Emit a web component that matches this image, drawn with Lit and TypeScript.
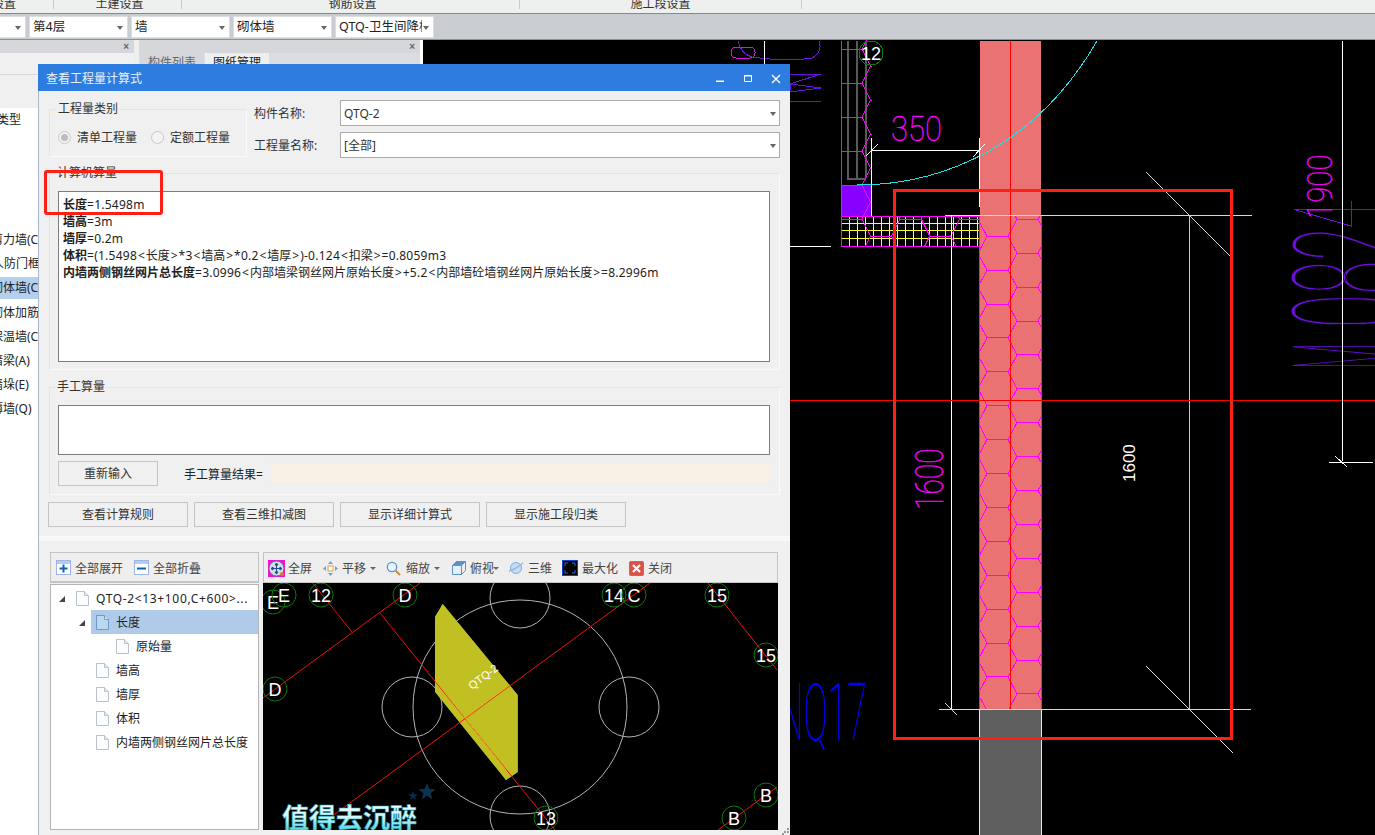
import { LitElement, html, css, svg } from 'lit';
import { customElement } from 'lit/decorators.js';

// hexagon mesh used by the wall hatching, returned as one path string
function hexPath(ox: number, oy: number, dx: number, p: number, cols: number, rowsUp: number, rowsDown: number) {
  let d = '';
  const L = 21;
  for (let c = 0; c < cols; c++) {
    for (let r = -rowsUp; r <= rowsDown; r++) {
      const x = ox + c * dx;
      const y = oy + r * p + (c % 2 ? p / 2 : 0);
      d += `M${x} ${y}h${L}M${x + L} ${y}L${x + dx} ${y - p / 2}M${x + L} ${y}L${x + dx} ${y + p / 2}`;
    }
  }
  return d;
}

const bubble = (x: number, y: number, t: string) => svg`
  <circle cx=${x} cy=${y} r="12" fill="none" stroke="#0a7a0a"></circle>
  <text x=${x} y=${y + 6.5} class="bub">${t}</text>`;

const star = (x: number, y: number, r: number, fill: string) => {
  const pts = [];
  for (let i = 0; i < 10; i++) {
    const a = (Math.PI / 5) * i - Math.PI / 2;
    const q = i % 2 ? r * 0.42 : r;
    pts.push(`${x + q * Math.cos(a)},${y + q * Math.sin(a)}`);
  }
  return svg`<polygon points=${pts.join(' ')} fill=${fill}></polygon>`;
};

// the formula text spaces its latin runs wider than the CJK ones
const formula = (s: string) =>
  s.split(/([<>]|[^<>\u4e00-\u9fff]+)/).filter(Boolean).map((p) =>
    p === '<' || p === '>'
      ? html`<span class="ang">${p}</span>`
      : /[\u4e00-\u9fff]/.test(p)
        ? p
        : html`<span class="num">${p}</span>`,
  );

const leftRows: [string, number, boolean?][] = [
  ['砖墙类型', -27], ['', 0], ['', 0], ['', 0], ['', 0],
  ['剪力墙(C)', -9], ['人防门框', -8], ['砌体墙(C)', -9, true], ['砌体加筋', -9],
  ['保温墙(C)', -9], ['暗梁(A)', -9], ['墙垛(E)', -9], ['薄墙(Q)', -9],
];

const docIcon = (blue = false) => html`<svg class="doc" width="13" height="15" viewBox="0 0 13 15">
  <path d="M.5.5h8l4 4v10H.5z" fill=${blue ? '#bcd7f2' : '#fbfcfe'} stroke=${blue ? '#6d9cc9' : '#b9c1cf'}></path>
  <path d="M8.5.5v4h4" fill="#e3e8f0" stroke=${blue ? '#6d9cc9' : '#b9c1cf'}></path>
</svg>`;

@customElement('app-root')
export class AppRoot extends LitElement {
  static styles = css`
    :host {
      display: block;
      position: relative;
      width: 1375px;
      height: 835px;
      overflow: hidden;
      font: 12px 'Noto Sans', 'Noto Sans CJK SC', sans-serif;
      color: #222;
      background: #000;
    }
    .menu {
      display: flex;
      height: 13px;
      background: #eef0f0;
      border-bottom: 1px solid #85888c;
      overflow: hidden;
      line-height: 8px;
      color: #333;
    }
    .menu div {
      text-align: center;
      border-right: 1px solid #c9cccf;
      height: 9px;
      white-space: nowrap;
      box-sizing: content-box;
    }
    .bar {
      display: flex;
      gap: 3px;
      height: 26px;
      padding-top: 2px;
      box-sizing: border-box;
      background: #c9ccd1;
      border-bottom: 1px solid #8e9195;
      margin-left: -80px;
    }
    .pick {
      position: relative;
      box-sizing: border-box;
      width: 99px;
      height: 22px;
      background: #fff;
      border: 1px solid #dcdde0;
      padding-left: 3px;
      line-height: 20px;
      font-size: 12.5px;
      overflow: hidden;
      white-space: nowrap;
    }
    .pick.first { width: 106px; }
    .pick span { display: block; width: 83px; overflow: hidden; }
    .arrow {
      position: absolute;
      right: 4px;
      top: 9px;
      border: 3.5px solid transparent;
      border-top: 4px solid #666;
      border-bottom: 0;
    }
    .main { display: flex; height: 795px; }
    .left { display: flex; width: 423px; flex: none; background: #fff; }
    .p1 { width: 134px; background: #fff; }
    .gap { width: 5px; background: #eee; }
    .p2 { width: 281px; background: #eee; }
    .phead {
      position: relative;
      height: 13px;
      background: #d5d7db;
    }
    .phead i {
      position: absolute;
      right: 5px;
      top: 1px;
      font: bold 10px/12px 'Liberation Sans', sans-serif;
      color: #666;
    }
    .strip { height: 21px; background: #f0f0f0; border-bottom: 1px solid #d8d8d8; }
    .strip2 { height: 33px; background: #f0f0f0; }
    .tabs { display: flex; gap: 1px; height: 11px; padding-left: 1px; background: #dcdde0; }
    .tabs span { width: 64px; text-align: center; color: #666; background: #d5d7db; line-height: 20px; overflow: hidden; }
    .tabs span + span { background: #efefef; color: #222; }
    .lrow { height: 24px; line-height: 24px; white-space: nowrap; }
    .lrow span { display: block; }
    .lrow.sel span { background: #b5cfee; height: 22px; line-height: 22px; margin-top: 1px; }
    .lrow.sel { line-height: 22px; }
    .stage { flex: 1; position: relative; background: #000; }
    .stage svg { display: block; }
    .bub { fill: #fff; font: 18px 'Liberation Sans', sans-serif; text-anchor: middle; }
    .cad { font-family: Roboto, 'Liberation Sans', sans-serif; font-weight: 100; }
    .pink { fill: #ff00ff; stroke: #ff00ff; stroke-width: .35px; vector-effect: non-scaling-stroke; }
    .blue { fill: #0000ff; stroke: #0000ff; stroke-width: .35px; vector-effect: non-scaling-stroke; }
    .thin { stroke: #000; stroke-width: .6px; vector-effect: non-scaling-stroke; }
    .dlg {
      position: absolute;
      left: 38px;
      top: 64px;
      width: 752px;
      height: 771px;
      box-sizing: border-box;
      background: #f0f0f0;
      border-left: 1px solid #a9b7cf;
    }
    .title {
      display: flex;
      align-items: center;
      height: 27px;
      margin-left: -1px;
      padding-left: 8px;
      background: #2d7de0;
      color: #e9f2fc;
    }
    .title svg { margin-left: auto; margin-right: 4px; }
    .body { padding: 0 10px; position: relative; }
    fieldset {
      margin: 0;
      padding: 0;
      box-sizing: border-box;
      border: 1px solid #e4e4e4;
      border-right-color: #fafafa;
      border-bottom-color: #fafafa;
      min-width: 0;
    }
    legend { margin-left: 7px; padding: 0 1px; line-height: 12px; color: #333; }
    .top { display: flex; padding-top: 9px; height: 58px; box-sizing: content-box; }
    .kind {
      width: 198px;
      height: 54px;
      margin-top: 3px;
      flex: none;
    }
    .radios { display: flex; align-items: center; margin: 13px 0 0 8px; height: 18px; color: #333; }
    .radio {
      box-sizing: border-box;
      width: 13px;
      height: 13px;
      border-radius: 50%;
      border: 1px solid #c8c8c8;
      background: #f4f4f4;
      margin-right: 6px;
      display: grid;
      place-items: center;
    }
    .radio b { width: 7px; height: 7px; border-radius: 50%; background: #bcbcbc; }
    .radios label { margin-right: 14px; }
    .form {
      flex: 1;
      display: grid;
      grid-template-columns: 86px 1fr;
      grid-auto-rows: 26px;
      row-gap: 6px;
      align-items: center;
      margin-left: 7px;
      color: #333;
    }
    .box {
      position: relative;
      box-sizing: border-box;
      height: 26px;
      background: #fff;
      border: 1px solid #adadad;
      line-height: 25px;
      padding-left: 3px;
    }
    .box .arrow { right: 3px; top: 11px; }
    .calc { height: 203px; margin-top: 9px; padding: 0 9px 0 8px; }
    .calc legend, .hand legend { margin-left: -2px; }
    .area {
      box-sizing: border-box;
      background: #fff;
      border: 1px solid #7d7d7d;
    }
    .calc .area { height: 171px; margin-top: 12px; padding: 4px 4px; line-height: 17px; color: #222; white-space: nowrap; }
    .calc b { font-weight: 700; }
    .num { letter-spacing: .25px; }
    .ang { padding: 0 .95px; }
    .hand { height: 114px; margin-top: 11px; padding: 0 9px 0 8px; }
    .hand .area { height: 50px; margin-top: 12px; }
    .hrow { display: flex; align-items: center; margin-top: 6px; }
    .btn {
      box-sizing: border-box;
      height: 25px;
      background: #f0f0f0;
      border: 1px solid #c4c4c4;
      text-align: center;
      line-height: 23px;
      color: #333;
      flex: none;
    }
    .hrow .btn { width: 100px; margin-right: 26px; }
    .res { flex: 1; height: 21px; margin-left: 7px; background: #f9f0e6; border: 1px solid #eee; box-sizing: border-box; }
    .btns { display: flex; gap: 6px; margin: 7px 0 0 -1px; }
    .btns .btn { width: 140px; }
    .band { height: 5px; margin: 9px -10px 0; background: #f8f8f8; }
    .lower { display: flex; gap: 4px; margin: 11px 0 0 1px; }
    .tree-p { width: 209px; flex: none; }
    .view-p { width: 515px; flex: none; }
    .tool {
      display: flex;
      align-items: center;
      box-sizing: border-box;
      height: 31px;
      padding-top: 1px;
      background: #eee;
      border: 1px solid #c4c4c4;
      color: #444;
      white-space: nowrap;
    }
    .tool svg { flex: none; }
    .tool .tri {
      margin: 0 0 0 4px;
      border: 3px solid transparent;
      border-top: 3px solid #666;
      border-bottom: 0;
      flex: none;
    }
    .tree-p .tool { height: 31px; padding-left: 5px; border-bottom-width: 2px; }
    .tree {
      box-sizing: border-box;
      height: 246px;
      margin-top: 1px;
      background: #fff;
      border: 1px solid #b5b5b5;
      padding-top: 1px;
    }
    .node {
      display: flex;
      align-items: center;
      height: 24px;
      white-space: nowrap;
      color: #222;
    }
    .node .doc { margin-right: 7px; flex: none; }
    .node.sel { background: #b0cbea; }
    .node.root { letter-spacing: .65px; }
    .twist {
      width: 0;
      height: 0;
      border-style: solid;
      border-width: 0 0 6px 6px;
      border-color: transparent transparent #444 transparent;
      margin-top: 1px;
      flex: none;
    }
    .mini { display: block; background: #000; }
    .cap { font: bold 27px 'Noto Sans CJK SC', sans-serif; }
    .note {
      position: absolute;
      left: 5px;
      top: 79px;
      width: 119px;
      height: 45px;
      box-sizing: border-box;
      border: 3px solid #ff2015;
      border-radius: 3px;
    }
    .grip { position: absolute; right: 1px; bottom: 0; }
  `;

  private stage() {
    const wall = hexPath(957, 219.3, 30, 33.9, 4, 1, 15);
    const col = hexPath(841, 219, 29.6, 34, 6, 6, 1);
    let v = '';
    for (let x = 841; x < 980; x += 8) v += `M${x} 216V247`;
    for (let y = 223; y < 247; y += 7.7) v += `M841 ${y}H980`;
    return svg`
    <svg width="952" height="795" viewBox="423 40 952 795" shape-rendering="crispEdges">
      <defs>
        <clipPath id="cw"><rect x="980" y="216" width="61" height="494"></rect></clipPath>
        <clipPath id="cc"><rect x="841" y="40" width="31" height="176"></rect><rect x="841" y="216" width="139" height="31"></rect></clipPath>
      </defs>
      <!-- door symbol top, mostly behind the dialog -->
      <rect x="731" y="47" width="24" height="11" rx="5" fill="none" stroke="#e010e0"></rect>
      <path d="M738 41Q742 58 760 58Q790 62 812 58Q823 52 819 41" fill="none" stroke="#7a10e8"></path>
      <path d="M764 41V64" stroke="#fff"></path>
      <path d="M790 74H821L790 84V92L821 88M790 101H821M790 84L821 88" fill="none" stroke="#6a10d8"></path>
      <path d="M790 246H831" stroke="#fff"></path>

      <rect x="841" y="185" width="31" height="31" fill="#8800ff"></rect>
      <path d="${v}" stroke="#ffff33"></path>
      <path d="M847.5 41V178.5H866M857 41V178M866 41V178" fill="none" stroke="#585858" stroke-width="2"></path>
      <path d="${col}" fill="none" stroke="#ff00ff" clip-path="url(#cc)"></path>
      <path d="M841.5 41V246.5H980M841.5 216H980" fill="none" stroke="#ff00ff"></path>
      ${bubble(871, 53, '12')}

      <rect x="980" y="41" width="61" height="669" fill="#eb7272"></rect>
      <rect x="980" y="710" width="61" height="125" fill="#5f5f5f"></rect>
      <path d="M979.5 710V835M1041.5 710V835" stroke="#ffff33"></path>
      <path d="${wall}" fill="none" stroke="#ff00ff" clip-path="url(#cw)"></path>
      <path d="M980 215.5H1041M979.5 215V710M1041 215V710M980 709.5H1041" fill="none" stroke="#ff00ff"></path>
      <path d="M1010.5 41V710" stroke="#ff0000"></path>

      <path d="M857 185C950 185 1040 140 1097 41" fill="none" stroke="#19e3e8"></path>

      <path d="M871.5 138V216M871 150.5H980M979.5 138V207M866 156L878 144M973 157L985 144" fill="none" stroke="#fff"></path>
      <text class="cad pink" transform="translate(891 141) scale(.86 1)" font-size="36">350</text>

      <!-- dimension lines -->
      <path d="M945 215.5H1252" stroke="#d8d8d8"></path>
      <path d="M951.5 215V709" stroke="#fff"></path>
      <path d="M1189.5 215V709" stroke="#c8c8c8"></path>
      <path d="M939 709.5H1251" stroke="#d8d8d8"></path>
      <path d="M1146 172L1230 256M1146 666L1233 753M945 703L957 715" stroke="#ddd"></path>
      <text class="cad pink" transform="translate(943 510) rotate(-90) scale(.74 1)" font-size="38">1600</text>
      <text transform="translate(1135 482) rotate(-90)" font-size="17" fill="#fff" font-family="Liberation Sans">1600</text>

      <path d="M790 400.5H1375" stroke="#ff0000"></path>

      <!-- right-hand door label -->
      <path d="M1294 209.5H1375M1294 209.5L1351 226V201" fill="none" stroke="#6a10d8"></path>
      <text class="cad pink" transform="translate(1332 219) rotate(-90) scale(.82 1)" font-size="36">1900</text>
      <text class="cad" transform="translate(1400 369) rotate(-90) scale(.2 1)" font-size="150" fill="#6a10d8">M</text>
      <text class="cad thin" transform="translate(1400 328) rotate(-90) scale(.41 1)" font-size="150" fill="#6a10d8">082</text>
      <path d="M1342.5 41V461M1329 462H1373M1335 456L1347 467" fill="none" stroke="#fff"></path>

      <text class="cad blue" transform="translate(778 740) scale(.45 1)" font-size="80">NQ17</text>

      <rect x="894.5" y="190.5" width="337" height="548" rx="1" fill="none" stroke="#ff2015" stroke-width="3.5"></rect>
    </svg>`;
  }

  private mini() {
    return svg`
    <svg class="mini" width="515" height="247" viewBox="263 583 515 247">
      <defs>
        <linearGradient id="capg" x1="0" y1="0" x2="0" y2="1">
          <stop offset="0" stop-color="#ffffff"></stop>
          <stop offset=".5" stop-color="#d6f8fb"></stop>
          <stop offset="1" stop-color="#1cc3d8"></stop>
        </linearGradient>
      </defs>
      <path d="M442.7 604L435 617V691.7L506 780L517.7 772V695Z" fill="#c0bf23"></path>
      <g fill="none" stroke="#b4b4b4">
        <circle cx="520" cy="707" r="107"></circle>
        <circle cx="520" cy="598" r="30"></circle>
        <circle cx="520" cy="816" r="30"></circle>
        <circle cx="412" cy="707" r="30"></circle>
        <circle cx="629" cy="707" r="30"></circle>
      </g>
      <path d="M442.7 604L435 617V691.7L506 780L517.7 772V695Z" fill="#c0bf23" fill-opacity=".85"></path>
      <g fill="none" stroke="#ee1111">
        <path d="M263 698L420 583"></path>
        <path d="M650 583L320 825"></path>
        <path d="M312.7 583L352 632"></path>
        <path d="M380 613L555 830"></path>
        <path d="M708 583L777 670"></path>
        <path d="M777 787L718 830"></path>
      </g>
      <path d="M510 685L465 718M435 680L506 770" stroke="#f0a020" fill="none"></path>
      <text transform="translate(472 690) rotate(-37)" font-size="11" fill="#fff" font-family="Liberation Sans">QTQ-2</text>
      ${bubble(273, 602, 'E')}${bubble(284, 595, 'E')}${bubble(321, 595, '12')}
      ${bubble(405, 595, 'D')}${bubble(275, 689, 'D')}${bubble(614, 595, '14')}
      ${bubble(634, 595, 'C')}${bubble(717, 595, '15')}${bubble(766, 655, '15')}
      ${bubble(546, 818, '13')}${bubble(766, 795, 'B')}${bubble(734, 818, 'B')}
      ${star(413, 796, 5, '#0b2a45')}${star(427, 792, 9, '#0c3350')}
      <text x="282" y="828" class="cap" fill="url(#capg)" stroke="#17a9c0" stroke-width=".5" textLength="135">值得去沉醉</text>
    </svg>`;
  }

  render() {
    return html`
      <div class="menu">
        <div style="width:53px;text-indent:-8px;text-align:left">设置</div>
        <div style="width:123px;padding-left:4px">土建设置</div>
        <div style="width:333px;padding-left:4px">钢筋设置</div>
        <div style="width:281px">施工段设置</div>
      </div>
      <div class="bar">
        <div class="pick first"><i class="arrow"></i></div>
        ${['第4层', '墙', '砌体墙', 'QTQ-卫生间降板'].map(
          (t) => html`<div class="pick"><span>${t}</span><i class="arrow"></i></div>`,
        )}
      </div>
      <div class="main">
        <div class="left">
          <div class="p1">
            <div class="phead"><i>×</i></div>
            <div class="strip"></div>
            <div class="strip2"></div>
            ${leftRows.map(
              ([t, off, sel]) => html`<div class="lrow ${sel ? 'sel' : ''}"><span style="text-indent:${off}px">${t}</span></div>`,
            )}
          </div>
          <div class="gap"></div>
          <div class="p2">
            <div class="phead"><i>×</i></div>
            <div class="tabs"><span>构件列表</span><span>图纸管理</span></div>
          </div>
        </div>
        <div class="stage">${this.stage()}</div>
      </div>

      <div class="dlg">
        <div class="title">
          查看工程量计算式
          <svg width="70" height="27" viewBox="0 0 70 27">
            <path d="M0 16.5H8V18H0Z" fill="#fff"></path>
            <path d="M28.5 11.5H35.5V17.5H28.5ZM28 12H36" fill="none" stroke="#fff"></path>
            <path d="M56 11L64 19M64 11L56 19" stroke="#fff" stroke-width="1.4"></path>
          </svg>
        </div>
        <div class="body">
          <div class="top">
            <fieldset class="kind">
              <legend>工程量类别</legend>
              <div class="radios">
                <span class="radio"><b></b></span><label>清单工程量</label>
                <span class="radio"></span><label>定额工程量</label>
              </div>
            </fieldset>
            <div class="form">
              <span>构件名称:</span>
              <div class="box">QTQ-2<i class="arrow"></i></div>
              <span>工程量名称:</span>
              <div class="box">[全部]<i class="arrow"></i></div>
            </div>
          </div>

          <fieldset class="calc">
            <legend>计算机算量</legend>
            <div class="area">
              <div><b>长度</b>${formula('=1.5498m')}</div>
              <div><b>墙高</b>${formula('=3m')}</div>
              <div><b>墙厚</b>${formula('=0.2m')}</div>
              <div><b>体积</b>${formula('=(1.5498<长度>*3<墙高>*0.2<墙厚>)-0.124<扣梁>=0.8059m3')}</div>
              <div><b>内墙两侧钢丝网片总长度</b>${formula('=3.0996<内部墙梁钢丝网片原始长度>+5.2<内部墙砼墙钢丝网片原始长度>=8.2996m')}</div>
            </div>
          </fieldset>

          <fieldset class="hand">
            <legend>手工算量</legend>
            <div class="area"></div>
            <div class="hrow">
              <div class="btn">重新输入</div>
              <span>手工算量结果=</span>
              <div class="res"></div>
            </div>
          </fieldset>

          <div class="btns">
            <div class="btn">查看计算规则</div>
            <div class="btn">查看三维扣减图</div>
            <div class="btn">显示详细计算式</div>
            <div class="btn">显示施工段归类</div>
          </div>
          <div class="band"></div>

          <div class="lower">
            <div class="tree-p">
              <div class="tool">
                <svg width="15" height="15" viewBox="0 0 15 15" style="margin-right:4px">
                  <rect x=".5" y=".5" width="14" height="14" fill="#fff" stroke="#9db4e6"></rect>
                  <rect x="1" y="1" width="13" height="3" fill="#b9c9f0"></rect>
                  <path d="M3.5 8.5H11.5M7.5 4.5V12.5" stroke="#0a62b8" stroke-width="2"></path>
                </svg>
                全部展开
                <svg width="15" height="15" viewBox="0 0 15 15" style="margin:0 4px 0 11px">
                  <rect x=".5" y=".5" width="14" height="14" fill="#fff" stroke="#9db4e6"></rect>
                  <rect x="1" y="1" width="13" height="3" fill="#b9c9f0"></rect>
                  <path d="M3 8.5H12" stroke="#0a62b8" stroke-width="2"></path>
                </svg>
                全部折叠
              </div>
              <div class="tree">
                <div class="node root"><i class="twist" style="margin-left:8px;margin-right:11px"></i>${docIcon()}QTQ-2&lt;13+100,C+600&gt;...</div>
                <div class="node sel" style="margin-left:40px"><i class="twist" style="margin-left:-12px;margin-right:11px"></i>${docIcon(true)}长度</div>
                <div class="node" style="padding-left:65px">${docIcon()}原始量</div>
                <div class="node" style="padding-left:45px">${docIcon()}墙高</div>
                <div class="node" style="padding-left:45px">${docIcon()}墙厚</div>
                <div class="node" style="padding-left:45px">${docIcon()}体积</div>
                <div class="node" style="padding-left:45px">${docIcon()}内墙两侧钢丝网片总长度</div>
              </div>
            </div>
            <div class="view-p">
              <div class="tool">
                <svg width="17" height="17" viewBox="0 0 17 17" style="margin:0 3px 0 4px">
                  <rect width="17" height="17" fill="#f010d0"></rect>
                  <circle cx="8.5" cy="8.5" r="7.5" fill="#d3dcea" stroke="#5c7397"></circle>
                  <path d="M8.5 3V14M3 8.5H14M8.5 3L7 5H10ZM8.5 14L7 12H10ZM3 8.5L5 7V10ZM14 8.5L12 7V10Z" stroke="#1e4c8e" fill="#1e4c8e"></path>
                  <circle cx="14" cy="14" r="2" fill="#d08030"></circle>
                </svg>
                全屏
                <svg width="15" height="15" viewBox="0 0 15 15" style="margin:0 4px 0 11px">
                  <path d="M7.5 0L10 3H5ZM7.5 15L10 12H5ZM0 7.5L3 5V10ZM15 7.5L12 5V10Z" fill="#6aa5d8"></path>
                  <rect x="5" y="5" width="5" height="5" fill="#fff" stroke="#e0a050"></rect>
                </svg>
                平移<i class="tri"></i>
                <svg width="15" height="15" viewBox="0 0 15 15" style="margin:0 5px 0 10px">
                  <circle cx="6" cy="6" r="4.7" fill="#e8f2fb" stroke="#5b92c8" stroke-width="1.3"></circle>
                  <path d="M9.5 9.5L14 14" stroke="#c88a40" stroke-width="2"></path>
                </svg>
                缩放<i class="tri"></i>
                <svg width="14" height="14" viewBox="0 0 14 14" style="margin:0 4px 0 12px">
                  <path d="M.5 4.5H9.5V13.5H.5ZM.5 4.5L4.5.5H13.5L9.5 4.5M13.5.5V9.5L9.5 13.5" fill="#e6f0fa" stroke="#5b92c8"></path>
                  <path d="M.5 4.5L4.5.5H13.5L9.5 4.5Z" fill="#5b92c8"></path>
                </svg>
                俯视<i class="tri" style="margin-left:-1px"></i>
                <svg width="16" height="14" viewBox="0 0 16 14" style="margin:0 4px 0 9px">
                  <circle cx="8" cy="7" r="5.5" fill="#c5dcf4" stroke="#7faedb"></circle>
                  <path d="M1 10Q8 8 15 2" fill="none" stroke="#8fbbe4" stroke-width="1.5"></path>
                </svg>
                三维
                <svg width="16" height="16" viewBox="0 0 16 16" style="margin:0 4px 0 10px">
                  <rect x=".5" y=".5" width="15" height="15" fill="#000" stroke="#0a46c8"></rect>
                  <path d="M3 6V3H6M10 3H13V6M13 10V13H10M6 13H3V10" fill="none" stroke="#2a6adf"></path>
                </svg>
                最大化
                <svg width="15" height="15" viewBox="0 0 15 15" style="margin:0 4px 0 11px">
                  <rect x=".5" y=".5" width="14" height="14" rx="1" fill="#d9534a" stroke="#a5766a"></rect>
                  <path d="M4 4L11 11M11 4L4 11" stroke="#fff" stroke-width="2.2"></path>
                </svg>
                关闭
              </div>
              ${this.mini()}
            </div>
          </div>
          <div class="note"></div>
        </div>
        <svg class="grip" width="7" height="7" viewBox="0 0 7 7">
          <path d="M5 0h2v2H5zM2 3h2v2H2zM5 3h2v2H5zM0 5h2v2H0z" fill="#999"></path>
        </svg>
      </div>
    `;
  }
}

declare global {
  interface HTMLElementTagNameMap {
    'app-root': AppRoot;
  }
}
